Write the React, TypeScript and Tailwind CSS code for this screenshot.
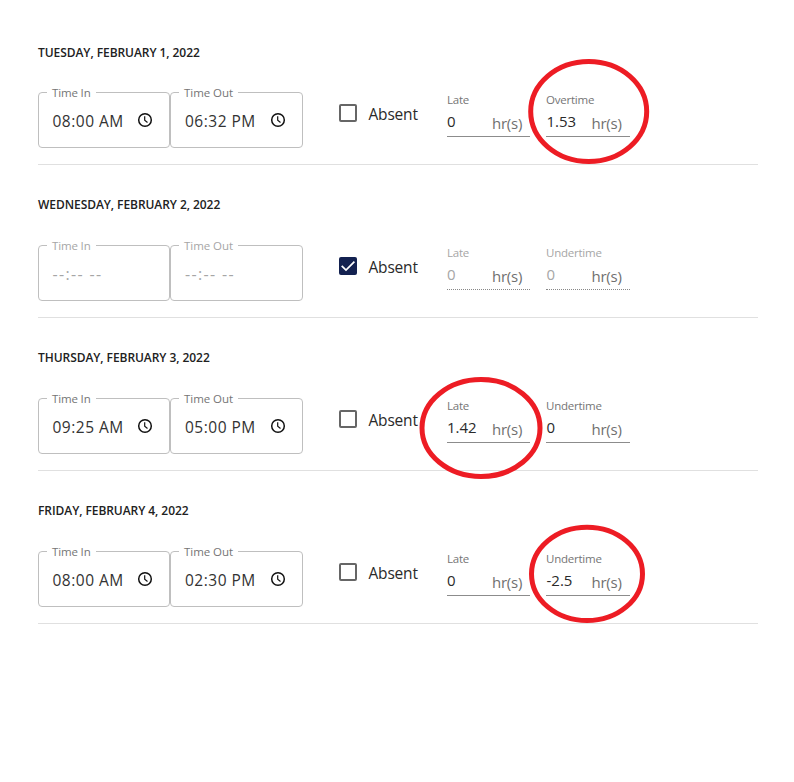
type Day = {
  title: string;
  timeIn: string;
  timeOut: string;
  absent?: boolean;
  late: string;
  label: string;
  value: string;
};

const days: Day[] = [
  { title: "Tuesday, February 1, 2022", timeIn: "08:00 AM", timeOut: "06:32 PM", late: "0", label: "Overtime", value: "1.53" },
  { title: "Wednesday, February 2, 2022", timeIn: "--:-- --", timeOut: "--:-- --", absent: true, late: "0", label: "Undertime", value: "0" },
  { title: "Thursday, February 3, 2022", timeIn: "09:25 AM", timeOut: "05:00 PM", late: "1.42", label: "Undertime", value: "0" },
  { title: "Friday, February 4, 2022", timeIn: "08:00 AM", timeOut: "02:30 PM", late: "0", label: "Undertime", value: "-2.5" },
];

function ClockIcon() {
  return (
    <svg width="16" height="16" viewBox="0 0 16 16" fill="none" stroke="#111" className="shrink-0">
      <circle cx="8" cy="8" r="6.3" strokeWidth="1.5" />
      <path d="M7.7 4.2v4.1l2.8 2.1" strokeWidth="1.2" />
    </svg>
  );
}

function TimeField({ label, value, disabled, wide }: { label: string; value: string; disabled?: boolean; wide?: boolean }) {
  return (
    <fieldset className={`h-[62px] -mt-1.5 rounded border border-[#bfbfbf] pl-2 ${wide ? "w-[133px]" : "w-[132px]"}`}>
      <legend
        className={`h-3 whitespace-nowrap pl-[5px] text-[11.5px] leading-[14px] ${wide ? "w-[59px] tracking-[-0.05px]" : "w-[49px] tracking-[-0.15px]"} ${disabled ? "text-[#a6a6a6]" : "text-[#757575]"}`}
      >
        {label}
      </legend>
      <div className="flex h-[34px] items-center pl-[5px] pt-3">
        <span
          className={`whitespace-nowrap leading-5 ${disabled ? "text-base tracking-[1.35px] text-[#a6a6a6]" : "w-[85px] text-[15.5px] tracking-[0.5px] text-[#333]"} ${wide ? "pl-px" : "pl-[0.5px]"}`}
        >
          {value}
        </span>
        {!disabled && (
          <span className={`-mt-0.5 ${wide ? "pl-[0.5px]" : ""}`}>
            <ClockIcon />
          </span>
        )}
      </div>
    </fieldset>
  );
}

function Checkbox({ checked }: { checked?: boolean }) {
  if (!checked) return <span className="size-[18px] rounded-[2px] border-2 border-[#666]" />;
  return (
    <span className="size-[18px] rounded-[2px] bg-[#132150]">
      <svg width="18" height="18" viewBox="0 0 18 18" fill="none" stroke="#fff" strokeWidth="1.7">
        <path d="M2.7 8.8l4.3 4.3L15.4 4.7" />
      </svg>
    </span>
  );
}

function HoursField({ label, value, disabled, wide }: { label: string; value: string; disabled?: boolean; wide?: boolean }) {
  return (
    <div
      className={`h-[45px] border-b ${wide ? "ml-4 w-[84px]" : "w-[83px]"} ${disabled ? "border-dotted border-[#888]" : "border-[#8c8c8c]"}`}
    >
      <div className={`h-4 text-[11.5px] leading-4 tracking-[-0.23px] ${disabled ? "text-[#a6a6a6]" : "text-[#757575]"}`}>{label}</div>
      <div className="flex pt-[3px]">
        <span className={`text-[15px] leading-5 ${wide ? "w-[45.5px] pl-[0.5px]" : "w-[45px]"} ${disabled ? "text-[#a6a6a6]" : "text-[#2a2a2a]"}`}>
          {value}
        </span>
        <span className="pt-0.5 text-[15px] leading-5 tracking-[-0.25px] text-[#707070]">hr(s)</span>
      </div>
    </div>
  );
}

function DayRow({ day, first }: { day: Day; first: boolean }) {
  return (
    <section className={`h-[153px] border-b border-[#e0e0e0] ${first ? "pt-[31px]" : "pt-[30px]"}`}>
      <h2
        className={`text-xs font-semibold uppercase leading-5 tracking-[-0.06px] text-[#212121] ${first ? "h-[49px]" : "h-[50px]"}`}
      >
        {day.title}
      </h2>
      <div className="flex h-14 items-start">
        <TimeField label="Time In" value={day.timeIn} disabled={day.absent} />
        <TimeField label="Time Out" value={day.timeOut} disabled={day.absent} wide />
        <label className="ml-9 mt-3 flex w-[108px] items-start text-[15.5px] leading-[18px] tracking-[-0.2px] text-[#2a2a2a]">
          <Checkbox checked={day.absent} />
          <span className="pl-[11.5px] pt-px">Absent</span>
        </label>
        <HoursField label="Late" value={day.late} disabled={day.absent} />
        <HoursField label={day.label} value={day.value} disabled={day.absent} wide />
      </div>
    </section>
  );
}

export default function App() {
  return (
    <main className="relative h-[782px] w-[794px] overflow-hidden bg-white pl-[38px] pr-9 pt-3 font-['Open_Sans','Noto_Sans',sans-serif]">
      {days.map((day, i) => (
        <DayRow key={day.title} day={day} first={i === 0} />
      ))}
      <svg className="pointer-events-none absolute inset-0" width="794" height="782" fill="none" stroke="#ed1c24" strokeWidth="5">
        <ellipse cx="588.7" cy="111.5" rx="58" ry="50" />
        <ellipse cx="481" cy="428" rx="59" ry="48.5" />
        <ellipse cx="587" cy="573.9" rx="55.5" ry="46.7" />
      </svg>
    </main>
  );
}
